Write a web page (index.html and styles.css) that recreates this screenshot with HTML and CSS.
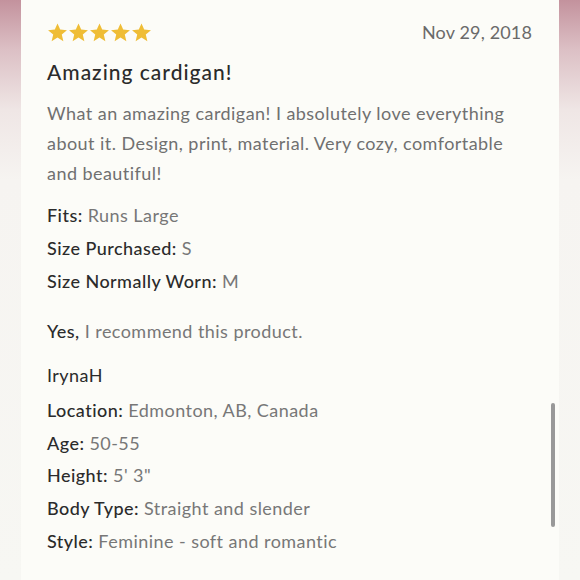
FILE: index.html
```html
<!DOCTYPE html>
<html>
<head>
<meta charset="utf-8">
<link rel="stylesheet" href="styles.css">
</head>
<body>
<div class="card">
  <div class="head">
    <div class="stars">
      <svg viewBox="0 0 24 24" class="star"><path d="M12 1.6l3.1 7.1 7.7.6-5.9 5 1.8 7.6L12 17.8l-6.7 4.1 1.8-7.6-5.9-5 7.7-.6z"/></svg>
      <svg viewBox="0 0 24 24" class="star"><path d="M12 1.6l3.1 7.1 7.7.6-5.9 5 1.8 7.6L12 17.8l-6.7 4.1 1.8-7.6-5.9-5 7.7-.6z"/></svg>
      <svg viewBox="0 0 24 24" class="star"><path d="M12 1.6l3.1 7.1 7.7.6-5.9 5 1.8 7.6L12 17.8l-6.7 4.1 1.8-7.6-5.9-5 7.7-.6z"/></svg>
      <svg viewBox="0 0 24 24" class="star"><path d="M12 1.6l3.1 7.1 7.7.6-5.9 5 1.8 7.6L12 17.8l-6.7 4.1 1.8-7.6-5.9-5 7.7-.6z"/></svg>
      <svg viewBox="0 0 24 24" class="star"><path d="M12 1.6l3.1 7.1 7.7.6-5.9 5 1.8 7.6L12 17.8l-6.7 4.1 1.8-7.6-5.9-5 7.7-.6z"/></svg>
    </div>
    <div class="date">Nov 29, 2018</div>
  </div>
  <h2 class="title">Amazing cardigan!</h2>
  <p class="body">What an amazing cardigan! I absolutely love everything about it. Design, print, material. Very cozy, comfortable and beautiful!</p>
  <div class="facts">
    <div class="row"><span class="lbl">Fits:</span> Runs Large</div>
    <div class="row"><span class="lbl">Size Purchased:</span> S</div>
    <div class="row"><span class="lbl">Size Normally Worn:</span> M</div>
  </div>
  <div class="rec"><span class="lbl">Yes,</span> I recommend this product.</div>
  <div class="author">IrynaH</div>
  <div class="facts">
    <div class="row"><span class="lbl">Location:</span> Edmonton, AB, Canada</div>
    <div class="row"><span class="lbl">Age:</span> 50-55</div>
    <div class="row"><span class="lbl">Height:</span> 5' 3"</div>
    <div class="row"><span class="lbl">Body Type:</span> Straight and slender</div>
    <div class="row"><span class="lbl">Style:</span> Feminine - soft and romantic</div>
  </div>
</div>
<div class="scrollbar"></div>
</body>
</html>
```

FILE: styles.css
```css
html, body {
  margin: 0;
  padding: 0;
  height: 100%;
}
body {
  background: linear-gradient(to bottom, #c3929d 0px, #dcc0c5 50px, #efe6e5 110px, #f6f4f1 180px, #f7f7f3 100%);
  font-family: Lato, "Noto Sans", sans-serif;
  overflow: hidden;
}
.card {
  margin: 0 21px;
  height: 100%;
  background: #fcfcf8;
  padding: 20px 27px 0 26px;
  box-sizing: border-box;
  color: #747474;
}
.head {
  display: flex;
  justify-content: space-between;
  align-items: center;
  height: 24px;
}
.stars {
  display: flex;
}
.star {
  width: 21px;
  height: 21px;
  fill: #efbd36;
}
.date {
  font-size: 18px;
  letter-spacing: 0.15px;
  color: #6a6a6a;
}
.title {
  margin: 15px 0 0;
  font-size: 21px;
  font-weight: 500;
  letter-spacing: 1px;
  color: #2b2b2b;
  line-height: 26px;
}
.body {
  margin: 13px 0 0;
  font-size: 18px;
  line-height: 30px;
  letter-spacing: 0.45px;
  color: #707070;
}
.facts {
  margin-top: 11px;
}
.row, .rec, .author {
  font-size: 18px;
  line-height: 32.75px;
  letter-spacing: 0.45px;
  color: #777777;
}
.lbl {
  color: #2b2b2b;
  font-weight: 500;
}
.rec {
  margin-top: 18px;
}
.author {
  margin-top: 11px;
  color: #2b2b2b;
}
.author + .facts {
  margin-top: 2px;
}
.scrollbar {
  position: absolute;
  left: 551px;
  top: 403px;
  width: 4px;
  height: 124px;
  border-radius: 2px;
  background: #999;
}
```
